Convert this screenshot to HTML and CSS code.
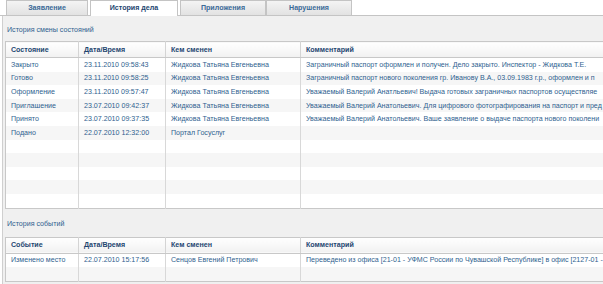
FILE: index.html
```html
<!DOCTYPE html>
<html lang="ru">
  <head>
    <meta charset="UTF-8" />
    <title>История дела</title>
    <link rel="stylesheet" href="styles.css">
  </head>
  <body>
    <div class="tabs">
      <div class="tab">Заявление</div>
      <div class="tab active">История дела</div>
      <div class="tab">Приложения</div>
      <div class="tab">Нарушения</div>
    </div>

    <div class="panel">
      <div class="caption">История смены состояний</div>
      <table class="grid states">
        <colgroup>
          <col class="c1" /><col class="c2" /><col class="c3" /><col />
        </colgroup>
        <thead>
          <tr><th>Состояние</th><th>Дата/Время</th><th>Кем сменен</th><th>Комментарий</th></tr>
        </thead>
        <tbody>
          <tr><td>Закрыто</td><td>23.11.2010 09:58:43</td><td>Жидкова Татьяна Евгеньевна</td><td>Заграничный паспорт оформлен и получен. Дело закрыто. Инспектор - Жидкова Т.Е.</td></tr>
          <tr><td>Готово</td><td>23.11.2010 09:58:25</td><td>Жидкова Татьяна Евгеньевна</td><td>Заграничный паспорт нового поколения гр. Иванову В.А., 03.09.1983 г.р., оформлен и п</td></tr>
          <tr><td>Оформление</td><td>23.11.2010 09:57:47</td><td>Жидкова Татьяна Евгеньевна</td><td>Уважаемый Валерий Анатльевич! Выдача готовых заграничных паспортов осуществляе</td></tr>
          <tr><td>Приглашение</td><td>23.07.2010 09:42:37</td><td>Жидкова Татьяна Евгеньевна</td><td>Уважаемый Валерий Анатольевич. Для цифрового фотографирования на паспорт и пред</td></tr>
          <tr><td>Принято</td><td>23.07.2010 09:37:35</td><td>Жидкова Татьяна Евгеньевна</td><td>Уважаемый Валерий Анатольевич. Ваше заявление о выдаче паспорта нового поколени</td></tr>
          <tr><td>Подано</td><td>22.07.2010 12:32:00</td><td>Портал Госуслуг</td><td></td></tr>
          <tr><td></td><td></td><td></td><td></td></tr>
          <tr><td></td><td></td><td></td><td></td></tr>
          <tr><td></td><td></td><td></td><td></td></tr>
          <tr><td></td><td></td><td></td><td></td></tr>
          <tr><td></td><td></td><td></td><td></td></tr>
        </tbody>
      </table>

      <div class="caption second">История событий</div>
      <table class="grid events">
        <colgroup>
          <col class="c1" /><col class="c2" /><col class="c3" /><col />
        </colgroup>
        <thead>
          <tr><th>Событие</th><th>Дата/Время</th><th>Кем сменен</th><th>Комментарий</th></tr>
        </thead>
        <tbody>
          <tr><td>Изменено место</td><td>22.07.2010 15:17:56</td><td>Сенцов Евгений Петрович</td><td>Переведено из офиса [21-01 - УФМС России по Чувашской Республике] в офис [2127-01 -</td></tr>
          <tr><td></td><td></td><td></td><td></td></tr>
        </tbody>
      </table>
    </div>
  </body>
</html>
```

FILE: styles.css
```css
body {
  margin: 0;
  width: 603px;
  height: 284px;
  overflow: hidden;
  background: #fff;
  font-family: "Liberation Sans", Arial, sans-serif;
  font-size: 7.1px;
  color: #2f5f8f;
}

.tabs {
  display: flex;
  align-items: flex-end;
  height: 16px;
  padding-left: 6px;
  border-bottom: 1px solid #c4c4c4;
  box-sizing: border-box;
}

.tab {
  width: 82px;
  height: 15px;
  margin-right: 2px;
  line-height: 14px;
  text-align: center;
  font-weight: bold;
  color: #3b6a98;
  background: linear-gradient(#f4f4f4, #e2e2e2);
  border: 1px solid #c4c4c4;
  border-bottom: none;
  box-sizing: border-box;
}

.tab.active {
  width: 88px;
  height: 16px;
  margin-bottom: -1px;
  background: #fff;
  color: #1d4670;
}

.tab:nth-child(3),
.tab:nth-child(4) {
  width: 86px;
  margin-right: 0;
}

.panel {
  margin-left: 2px;
  height: 268px;
  background: #f0f0f0;
  border-left: 1px solid #cfcfcf;
  overflow: hidden;
}

.caption {
  height: 25px;
  padding-left: 4px;
  line-height: 28px;
  color: #2f5f8f;
}

.caption.second {
  height: 28px;
  line-height: 30px;
}

.grid {
  margin-left: 2px;
  width: 640px;
  border-collapse: collapse;
  table-layout: fixed;
  background: #fff;
  border: 1px solid #c8c8c8;
}

.grid col.c1 {
  width: 73px;
}

.grid col.c2 {
  width: 87px;
}

.grid col.c3 {
  width: 135px;
}

.grid th {
  height: 15px;
  padding: 0 5px;
  text-align: left;
  font-weight: bold;
  color: #1d4670;
  background: linear-gradient(#ffffff, #f1f1f1);
  border-right: 1px solid #d4d4d4;
  border-bottom: 1px solid #c8c8c8;
}

.grid td {
  height: 13.6px;
  padding: 0 5px;
  white-space: nowrap;
  overflow: hidden;
  border-right: 1px solid #d8d8d8;
}

.grid tbody tr:nth-child(even) td {
  background: #f6f6f6;
}

.grid td:last-child,
.grid th:last-child {
  border-right: none;
}
```
